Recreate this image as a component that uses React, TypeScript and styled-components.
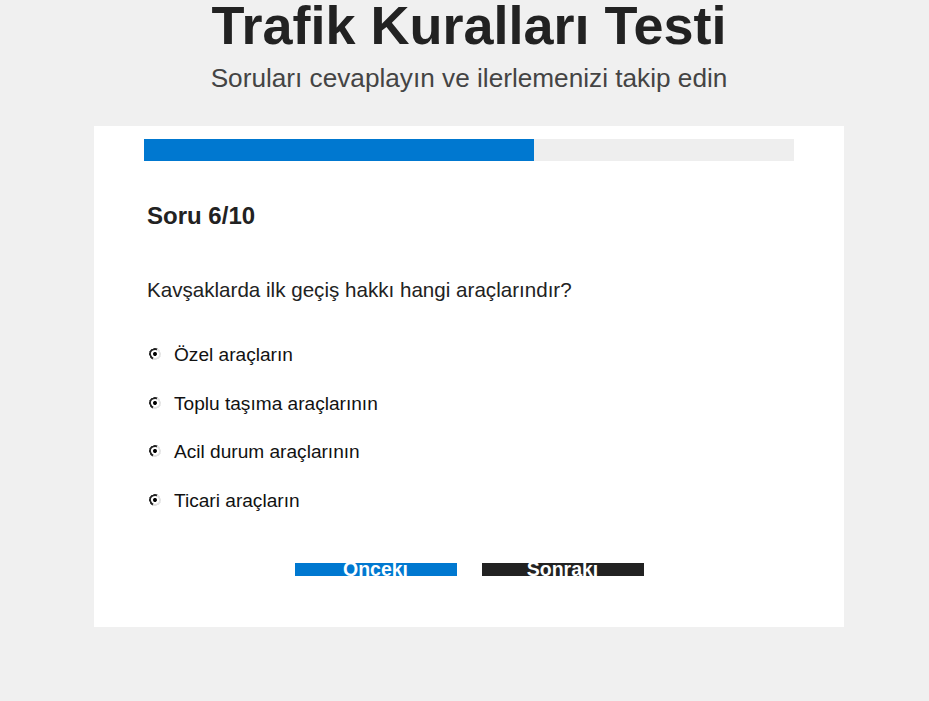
import React from "react";
import styled, { createGlobalStyle } from "styled-components";

const Global = createGlobalStyle`
  html, body { margin: 0; padding: 0; background: #f0f0f0; }
  body { font-family: "Liberation Sans", Arial, sans-serif; color: #222; padding-left: 9px; }
`;

const Page = styled.div`
  width: 750px;
  margin: 0 auto;
  display: flex;
  flex-direction: column;
  align-items: stretch;
`;

const Header = styled.header`
  display: flex;
  flex-direction: column;
  align-items: center;
`;

const Title = styled.h1`
  margin: 0;
  font-size: 54px;
  line-height: 50px;
  font-weight: 700;
  color: #222;
  white-space: nowrap;
`;

const Subtitle = styled.p`
  margin: 13px 0 0;
  font-size: 26.2px;
  line-height: 30px;
  color: #444;
`;

const Card = styled.main`
  margin-top: 33px;
  background: #fff;
  padding: 13px 50px 51px;
  height: 501px;
  box-sizing: border-box;
  display: flex;
  flex-direction: column;
`;

const Track = styled.div`
  height: 22px;
  background: #eeeeee;
  display: flex;
`;

const Fill = styled.div`
  height: 100%;
  background: #0078d0;
`;

const Content = styled.section`
  padding: 0 3px;
  display: flex;
  flex-direction: column;
`;

const QuestionNo = styled.h2`
  margin: 41px 0 0;
  font-size: 24px;
  line-height: 28px;
  font-weight: 700;
  color: #222;
`;

const QuestionText = styled.p`
  margin: 48px 0 0;
  font-size: 20.6px;
  line-height: 24px;
  color: #222;
`;

const Options = styled.div`
  margin-top: 41px;
  display: flex;
  flex-direction: column;
  gap: 24.67px;
`;

const Option = styled.label`
  display: flex;
  align-items: center;
  height: 24px;
  font-size: 19.1px;
  line-height: 24px;
  color: #111;
`;

const Radio = styled.span`
  width: 12px;
  height: 12px;
  box-sizing: border-box;
  margin: 0 13px 0 2px;
  border-radius: 50%;
  border: 2px solid;
  border-color: #222 #e2e2e2 #e2e2e2 #222;
  transform: rotate(-20deg);
  display: flex;
  align-items: center;
  justify-content: center;
  position: relative;
  top: -1px;
  &::after {
    content: "";
    width: 4px;
    height: 4px;
    border-radius: 50%;
    background: #000;
  }
`;

const Buttons = styled.div`
  margin-top: auto;
  display: flex;
  justify-content: center;
  gap: 25px;
`;

const NavButton = styled.button<{ $dark?: boolean }>`
  width: 162px;
  height: 13px;
  padding: 0;
  border: none;
  background: ${(p) => (p.$dark ? "#222222" : "#0078d0")};
  color: #fff;
  font-family: "Liberation Sans", Arial, sans-serif;
  font-size: 19.5px;
  font-weight: 700;
  line-height: 13px;
  overflow: visible;
  cursor: pointer;
`;

const answers = [
  "Özel araçların",
  "Toplu taşıma araçlarının",
  "Acil durum araçlarının",
  "Ticari araçların",
];

export default function App() {
  const current = 6;
  const total = 10;
  return (
    <>
      <Global />
      <Page>
        <Header>
          <Title>Trafik Kuralları Testi</Title>
          <Subtitle>Soruları cevaplayın ve ilerlemenizi takip edin</Subtitle>
        </Header>
        <Card>
          <Track>
            <Fill style={{ width: `${(current / total) * 100}%` }} />
          </Track>
          <Content>
            <QuestionNo>
              Soru {current}/{total}
            </QuestionNo>
            <QuestionText>Kavşaklarda ilk geçiş hakkı hangi araçlarındır?</QuestionText>
            <Options>
              {answers.map((a) => (
                <Option key={a}>
                  <Radio />
                  {a}
                </Option>
              ))}
            </Options>
          </Content>
          <Buttons>
            <NavButton>Önceki</NavButton>
            <NavButton $dark>Sonraki</NavButton>
          </Buttons>
        </Card>
      </Page>
    </>
  );
}
